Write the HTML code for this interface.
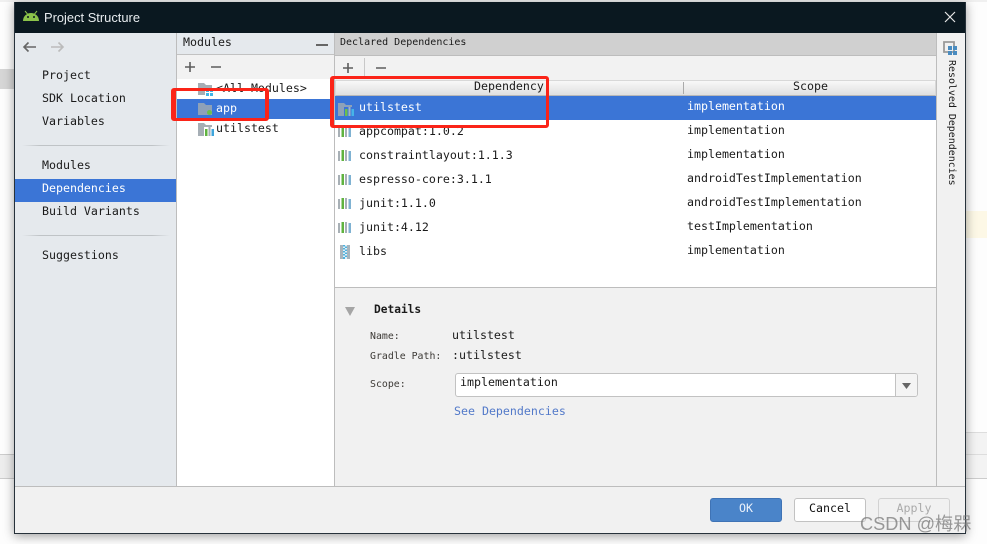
<!DOCTYPE html>
<html><head><meta charset="utf-8"><style>
html,body{margin:0;padding:0;background:#fff}
#p{position:relative;width:987px;height:544px;overflow:hidden;background:#fdfdfd;font-family:"DejaVu Sans Mono","Liberation Mono",monospace;font-size:11.62px;color:#1a1a1a}
#p div,#p svg{position:absolute}
.t{line-height:14px;height:14px;white-space:pre}
.s{font-size:9.9px;color:#3d3a36}
.w{color:#fff}
.b{width:72px;height:24px;box-sizing:border-box;border-radius:3px;text-align:center;line-height:19px;top:498px}
.sep{left:22px;width:148px;height:1px;background:linear-gradient(90deg,#e5e9ed,#bfc3c6 12%,#bfc3c6 88%,#e5e9ed)}
</style></head><body><div id="p">
<div style="left:0;top:69px;width:14px;height:20px;background:#d6d6d6"></div>
<div style="left:966px;top:211px;width:21px;height:27px;background:#fdf8e6"></div>
<div style="left:0;top:454px;width:14px;height:25px;background:#ededed;border-top:1px solid #ccc;border-bottom:1px solid #ccc;box-sizing:border-box"></div>
<div style="left:966px;top:432px;width:21px;height:47px;background:#f3f3f3;border-top:1px solid #ddd;border-bottom:1px solid #ccc;box-sizing:border-box"></div>
<div style="left:966px;top:454px;width:21px;height:1px;background:#ddd"></div>
<div style="left:0;top:0;width:987px;height:2px;background:#f0f0f0"></div>

<div style="left:14px;top:2px;width:952px;height:532px;box-shadow:0 2px 10px rgba(0,0,0,.38);background:#f1f1f1"></div>
<div style="left:14px;top:2px;width:952px;height:31px;background:#0a1820"></div>
<div style="left:14px;top:2px;width:1px;height:532px;background:#27323b"></div>
<div style="left:965px;top:2px;width:1px;height:532px;background:#27323b"></div>
<div style="left:14px;top:533px;width:952px;height:1px;background:#27323b"></div>

<svg style="left:22px;top:10px" width="18" height="12" viewBox="0 0 18 12"><path d="M1 11C1 6 5 3 9 3s8 3 8 8z" fill="#8bc34a"/><path d="M3 1l2.500 3M15 1l-2.500 3" stroke="#8bc34a" stroke-width="1"/><circle cx="6" cy="7" r="1" fill="#0a1820"/><circle cx="12" cy="7" r="1" fill="#0a1820"/></svg>
<div class="t" style="left:44px;top:10px;font:12.900px/15px 'Liberation Sans',sans-serif;color:#e8ecef;height:15px">Project Structure</div>
<svg style="left:944px;top:11px" width="12" height="12" viewBox="0 0 12 12"><path d="M1 1l10 10M11 1L1 11" stroke="#e6e6e6" stroke-width="1.200"/></svg>

<!-- left panel -->
<div style="left:15px;top:33px;width:161px;height:453px;background:#e5e9ed"></div>
<svg style="left:22px;top:41px" width="16" height="12" viewBox="0 0 16 12"><path d="M14 6H2M6.500 1.500L2 6l4.500 4.500" fill="none" stroke="#666" stroke-width="1.600"/></svg>
<svg style="left:49px;top:41px" width="16" height="12" viewBox="0 0 16 12"><path d="M2 6h12M9.500 1.500L14 6l-4.500 4.500" fill="none" stroke="#bbb" stroke-width="1.600"/></svg>
<div class="t" style="left:42px;top:68px">Project</div>
<div class="t" style="left:42px;top:91px">SDK Location</div>
<div class="t" style="left:42px;top:114px">Variables</div>
<div class="sep" style="top:145px"></div>
<div class="t" style="left:42px;top:158px">Modules</div>
<div style="left:15px;top:179px;width:161px;height:23px;background:#3b75d6"></div>
<div class="t w" style="left:42px;top:181px">Dependencies</div>
<div class="t" style="left:42px;top:204px">Build Variants</div>
<div class="sep" style="top:235px"></div>
<div class="t" style="left:42px;top:248px">Suggestions</div>
<div style="left:176px;top:33px;width:1px;height:453px;background:#bdbdbd"></div>

<!-- modules column -->
<div style="left:177px;top:33px;width:157px;height:21px;background:#e5e9ed"></div>
<div style="left:177px;top:54px;width:157px;height:1px;background:#c2c2c2"></div>
<div style="left:177px;top:55px;width:157px;height:24px;background:#f2f2f2"></div>
<div style="left:177px;top:79px;width:157px;height:407px;background:#fff"></div>
<div class="t" style="left:183px;top:35px">Modules</div>
<div style="left:316px;top:44px;width:12px;height:1.500px;background:#666"></div>
<svg style="left:184px;top:61px" width="12" height="12" viewBox="0 0 12 12"><path d="M6 1v10M1 6h10" stroke="#5c5c5c" stroke-width="1.600"/></svg>
<svg style="left:210px;top:61px" width="12" height="12" viewBox="0 0 12 12"><path d="M1 6h10" stroke="#666" stroke-width="1.600"/></svg>
<div style="left:177px;top:99px;width:157px;height:20px;background:#3b75d6"></div>
<svg style="left:198px;top:81px" width="16" height="16" viewBox="0 0 16 16"><path d="M0 2h6l2 2h6v10H0z" fill="#a6aeb5"/><path d="M7 7h8v8H7z" fill="#fff"/><path d="M8 8h3v3H8zM12 8h3v3h-3zM8 12h3v3H8zM12 12h3v3h-3z" fill="#3fb4e8"/></svg>
<div class="t" style="left:216px;top:81px">&lt;All Modules&gt;</div>
<svg style="left:198px;top:101px" width="16" height="16" viewBox="0 0 16 16"><path d="M0 2h6l2 2h6v10H0z" fill="#8ea1b8"/><circle cx="11.500" cy="11.500" r="2.500" fill="#6cc04a"/></svg>
<div class="t w" style="left:216px;top:101px">app</div>
<svg style="left:198px;top:121px" width="16" height="16" viewBox="0 0 16 16"><path d="M0 2h6l2 2h6v2H6v9H0z" fill="#a6aeb5"/><path d="M7 8h2.500v7H7z" fill="#5fb33f"/><path d="M10.500 6h2v9h-2z" fill="#a6aeb5"/><path d="M13.500 8H16v7h-2.500z" fill="#3fa5dc"/></svg>
<div class="t" style="left:216px;top:121px">utilstest</div>
<div style="left:334px;top:33px;width:1px;height:453px;background:#bdbdbd"></div>

<!-- deps -->
<div style="left:335px;top:33px;width:601px;height:22px;background:#d0d0d0"></div>
<div style="left:335px;top:55px;width:601px;height:1px;background:#bdbdbd"></div>
<div style="left:335px;top:56px;width:601px;height:24px;background:#f2f2f2"></div>
<div class="t" style="left:340px;top:36px;font-size:10px;font-weight:500">Declared Dependencies</div>
<svg style="left:342px;top:62px" width="12" height="12" viewBox="0 0 12 12"><path d="M6 1v10M1 6h10" stroke="#5c5c5c" stroke-width="1.600"/></svg>
<div style="left:364px;top:58px;width:1px;height:18px;background:#c8c8c8"></div>
<svg style="left:375px;top:62px" width="12" height="12" viewBox="0 0 12 12"><path d="M1 6h10" stroke="#666" stroke-width="1.600"/></svg>
<div style="left:335px;top:80px;width:601px;height:16px;background:linear-gradient(#f8f8f8,#e0e0e0);border:1px solid #d8d8d8;border-bottom:1px solid #b8b8b8;box-sizing:border-box"></div>
<div style="left:683px;top:82px;width:1px;height:12px;background:#aaa"></div>
<div class="t" style="left:474px;top:79px">Dependency</div>
<div class="t" style="left:793px;top:79px">Scope</div>
<div style="left:335px;top:96px;width:601px;height:191px;background:#fff"></div>
<div style="left:335px;top:96px;width:601px;height:24px;background:#3b75d6"></div>

<svg style="left:338px;top:102px" width="16" height="14" viewBox="0 0 16 14"><path d="M0 1h6l2 2h6v2H6v9H0z" fill="#8ea1b8"/><path d="M7 7h2.500v7H7z" fill="#6cc04a"/><path d="M10.500 5h2v9h-2z" fill="#a6b4c4"/><path d="M13.500 7H16v7h-2.500z" fill="#45b4e8"/></svg>
<div class="t w" style="left:359px;top:100px">utilstest</div>
<svg style="left:338px;top:125px" width="15" height="13" viewBox="0 0 15 13"><path d="M0 2h2v10H0zM7 1h2v11H7z" fill="#a8b0b6"/><path d="M3.500 1h2.500v11H3.500z" fill="#5fb33f"/><path d="M10.500 2H13v10h-2.500z" fill="#7fb2d2"/></svg>
<div class="t" style="left:359px;top:124px">appcompat:1.0.2</div>
<svg style="left:338px;top:149px" width="15" height="13" viewBox="0 0 15 13"><path d="M0 2h2v10H0zM7 1h2v11H7z" fill="#a8b0b6"/><path d="M3.500 1h2.500v11H3.500z" fill="#5fb33f"/><path d="M10.500 2H13v10h-2.500z" fill="#7fb2d2"/></svg>
<div class="t" style="left:359px;top:148px">constraintlayout:1.1.3</div>
<svg style="left:338px;top:173px" width="15" height="13" viewBox="0 0 15 13"><path d="M0 2h2v10H0zM7 1h2v11H7z" fill="#a8b0b6"/><path d="M3.500 1h2.500v11H3.500z" fill="#5fb33f"/><path d="M10.500 2H13v10h-2.500z" fill="#7fb2d2"/></svg>
<div class="t" style="left:359px;top:172px">espresso-core:3.1.1</div>
<svg style="left:338px;top:197px" width="15" height="13" viewBox="0 0 15 13"><path d="M0 2h2v10H0zM7 1h2v11H7z" fill="#a8b0b6"/><path d="M3.500 1h2.500v11H3.500z" fill="#5fb33f"/><path d="M10.500 2H13v10h-2.500z" fill="#7fb2d2"/></svg>
<div class="t" style="left:359px;top:196px">junit:1.1.0</div>
<svg style="left:338px;top:221px" width="15" height="13" viewBox="0 0 15 13"><path d="M0 2h2v10H0zM7 1h2v11H7z" fill="#a8b0b6"/><path d="M3.500 1h2.500v11H3.500z" fill="#5fb33f"/><path d="M10.500 2H13v10h-2.500z" fill="#7fb2d2"/></svg>
<div class="t" style="left:359px;top:220px">junit:4.12</div>
<svg style="left:340px;top:245px" width="10" height="14" viewBox="0 0 10 14"><path d="M0 0h10v14H0z" fill="#a8b4bc"/><path d="M3 0h4v14H3z" fill="#dff0f8"/><path d="M3 0h2v1.500H3zM5 1.500h2V3H5zM3 3h2v1.500H3zM5 4.500h2V6H5zM3 6h2v1.500H3zM5 7.500h2V9H5zM3 9h2v1.500H3zM5 10.500h2V12H5zM3 12h2v2H3z" fill="#4fb0dc"/></svg>
<div class="t" style="left:359px;top:244px">libs</div>

<div class="t w" style="left:687px;top:99px">implementation</div>
<div class="t" style="left:687px;top:123px">implementation</div>
<div class="t" style="left:687px;top:147px">implementation</div>
<div class="t" style="left:687px;top:171px">androidTestImplementation</div>
<div class="t" style="left:687px;top:195px">androidTestImplementation</div>
<div class="t" style="left:687px;top:219px">testImplementation</div>
<div class="t" style="left:687px;top:243px">implementation</div>

<div style="left:335px;top:287px;width:601px;height:1px;background:#bdbdbd"></div>
<svg style="left:345px;top:307px" width="10" height="9" viewBox="0 0 10 9"><path d="M0 0h10L5 9z" fill="#a5a5a5"/></svg>
<div class="t" style="left:374px;top:303px;font-weight:bold;font-size:11.200px">Details</div>
<div class="t s" style="left:370px;top:330px">Name:</div>
<div class="t" style="left:452px;top:328px">utilstest</div>
<div class="t s" style="left:370px;top:350px">Gradle Path:</div>
<div class="t" style="left:452px;top:348px">:utilstest</div>
<div class="t s" style="left:370px;top:378px">Scope:</div>
<div style="left:455px;top:373px;width:463px;height:24px;box-sizing:border-box;background:#fff;border:1px solid #c2c2c2;border-radius:3px"></div>
<div style="left:895px;top:374px;width:22px;height:22px;box-sizing:border-box;background:#f4f4f4;border-left:1px solid #c2c2c2;border-radius:0 2px 2px 0"></div>
<svg style="left:902px;top:383px" width="9" height="6" viewBox="0 0 9 6"><path d="M0 0h9L4.500 6z" fill="#666"/></svg>
<div class="t" style="left:460px;top:375px">implementation</div>
<div class="t" style="left:454px;top:404px;color:#5279c9">See Dependencies</div>

<!-- sidebar -->
<div style="left:936px;top:33px;width:1px;height:453px;background:#bdbdbd"></div>
<svg style="left:943px;top:41px" width="15" height="15" viewBox="0 0 15 15"><path d="M1 1h10v10H1z" fill="none" stroke="#9a9a9a" stroke-width="1.800"/><path d="M5 5h4v4H5zM10 5h4v4h-4zM5 10h4v4H5zM10 10h4v4h-4z" fill="#4a8cc0"/></svg>
<div style="left:944px;top:60px;width:14px;height:126px;line-height:14px;font-size:9.950px;writing-mode:vertical-rl;white-space:pre">Resolved Dependencies</div>

<!-- footer -->
<div style="left:15px;top:486px;width:950px;height:1px;background:#bdbdbd"></div>
<div class="b" style="left:710px;background:#4a84c9;border:1px solid #3f73b5;color:#eaf1fa">OK</div>
<div class="b" style="left:794px;background:#fff;border:1px solid #c2c2c2;color:#111">Cancel</div>
<div class="b" style="left:878px;background:#f1f1f1;border:1px solid #d2d2d2;color:#aaa">Apply</div>

<!-- red boxes -->
<div style="left:171px;top:88px;width:98px;height:33px;box-sizing:border-box;border:3px solid #fb2418;border-left-width:5px;border-right-width:4px;border-radius:3px"></div>
<div style="left:330px;top:76px;width:219px;height:52px;box-sizing:border-box;border:3px solid #fb2418;border-left-width:4px;border-radius:3px"></div>

<div class="t" style="left:860px;top:514px;height:20px;font:18.200px/20px 'Liberation Sans','Noto Sans CJK SC',sans-serif;color:rgba(120,120,120,.75)">CSDN @梅槑</div>
</div></body></html>
